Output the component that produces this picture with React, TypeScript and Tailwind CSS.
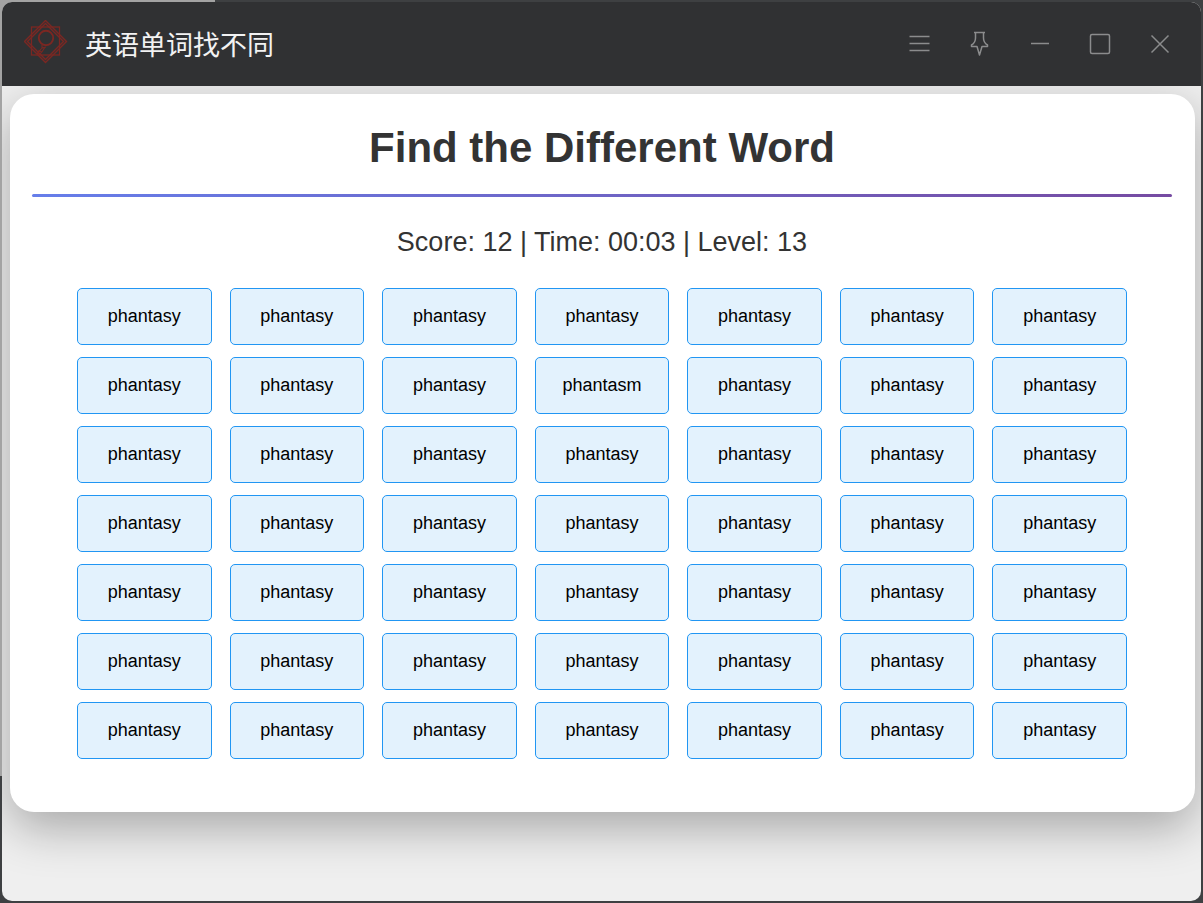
import React, { useState } from 'react';

const COLUMNS = 7;
const ROWS = 7;
const ODD_INDEX = 10;

const words = Array.from({ length: COLUMNS * ROWS }, (_, i) =>
  i === ODD_INDEX ? 'phantasm' : 'phantasy'
);

const Logo = () => (
  <svg className="mb-1" width="44" height="44" viewBox="0 0 44 44" fill="none" stroke="#7b2722" aria-hidden="true">
    <rect x="7.5" y="7" width="28" height="28" strokeWidth="1.3" />
    <path d="M21.5 .5 42.5 21.5 21.5 42.5 .5 21.5Z" strokeWidth="1.4" />
    <path d="M21.5 3.5 39.5 21.5 21.5 39.5 3.5 21.5Z" strokeWidth="1.4" />
    <circle cx="22" cy="18" r="7.2" strokeWidth="1.9" />
    <path d="M18 24.500v3.500l4-1M18 28l-3.500 4M20.500 28l-3 4.500" strokeWidth="1.1" />
    <path d="m15 30.500 2.500 1.500-1.500 2.500-2.500-1Z" strokeWidth="1.1" />
  </svg>
);

interface ControlProps {
  label: string;
  children: React.ReactNode;
}

const WindowControl: React.FC<ControlProps> = ({ label, children }) => (
  <button type="button" aria-label={label} className="flex h-11 w-15 items-center justify-center hover:bg-white/10">
    <svg
      width="26"
      height="26"
      viewBox="0 0 26 26"
      fill="none"
      stroke="#8b8c8d"
      strokeWidth="1.5"
      strokeLinejoin="round"
      aria-hidden="true"
    >
      {children}
    </svg>
  </button>
);

const TitleBar = () => (
  <header className="flex h-21 items-center bg-[#303133] pl-5.5 pr-[11px]">
    <Logo />
    <h1 className="ml-[17px] mt-1 flex-1 font-['Liberation_Sans','Noto_Sans_CJK_SC',sans-serif] text-[27px] leading-9 text-[#f2f2f2]">
      英语单词找不同
    </h1>
    <div className="flex">
      <WindowControl label="Menu">
        <path d="M2.500 5.500h20M2.500 12.500h20M2.500 19.500h20" />
      </WindowControl>
      <WindowControl label="Pin">
        <path d="M7 1.500h11M8.500 1.500v5.500c0 3-1.500 5.500-4 7v1.500h5.500l2.500 8.500 2.500-8.500h5.500v-1.500c-2.500-1.500-4-4-4-7v-5.500" />
      </WindowControl>
      <WindowControl label="Minimize">
        <path d="M4 12.500h18" />
      </WindowControl>
      <WindowControl label="Maximize">
        <rect x="3.500" y="3.500" width="19" height="19" rx="1.500" />
      </WindowControl>
      <WindowControl label="Close">
        <path d="m4.500 4.500 17 17M21.500 4.500l-17 17" />
      </WindowControl>
    </div>
  </header>
);

export default function App() {
  const [picked, setPicked] = useState<number | null>(null);

  return (
    <div className="relative flex min-h-screen flex-col bg-[#3e4042] p-0.5">
      {/* Light desktop edge behind the window */}
      <div className="absolute left-0 top-0 h-[776px] w-4 bg-[#a3a3a3]" />
      <div className="absolute left-0 top-0 h-4 w-[215px] bg-[#a3a3a3]" />

      <div className="relative flex flex-1 flex-col overflow-hidden rounded-[10px] bg-[#efefef]">
        <TitleBar />
        <div className="relative flex-1 overflow-hidden pl-2 pr-1.5 pt-2">
          <main className="rounded-3xl bg-white pb-[53px] pl-5.5 pr-[23px] pt-[29px] text-center font-['Liberation_Sans',Arial,sans-serif] text-[#333] shadow-[0_16px_48px_rgba(0,0,0,0.3)]">
            <h2 className="text-[42px] font-bold leading-[50px]">Find the Different Word</h2>
            <div className="mt-[21px] h-[3px] rounded-full bg-linear-to-r/srgb from-[#667eea] to-[#764ba2]" />
            <p className="mt-[29px] text-[27px] leading-8">Score: 12 | Time: 00:03 | Level: 13</p>
            <div className="mx-auto mt-[30px] grid max-w-[1050px] grid-cols-7 gap-x-[18px] gap-y-3">
              {words.map((word, i) => (
                <button
                  key={i}
                  type="button"
                  aria-pressed={picked === i}
                  onClick={() => setPicked(i)}
                  className="h-[57px] rounded-[5px] border border-[#2196f3] bg-[#e3f2fd] pb-0.5 text-lg text-black hover:bg-[#bbdefb]"
                >
                  {word}
                </button>
              ))}
            </div>
          </main>
        </div>
      </div>
    </div>
  );
}
